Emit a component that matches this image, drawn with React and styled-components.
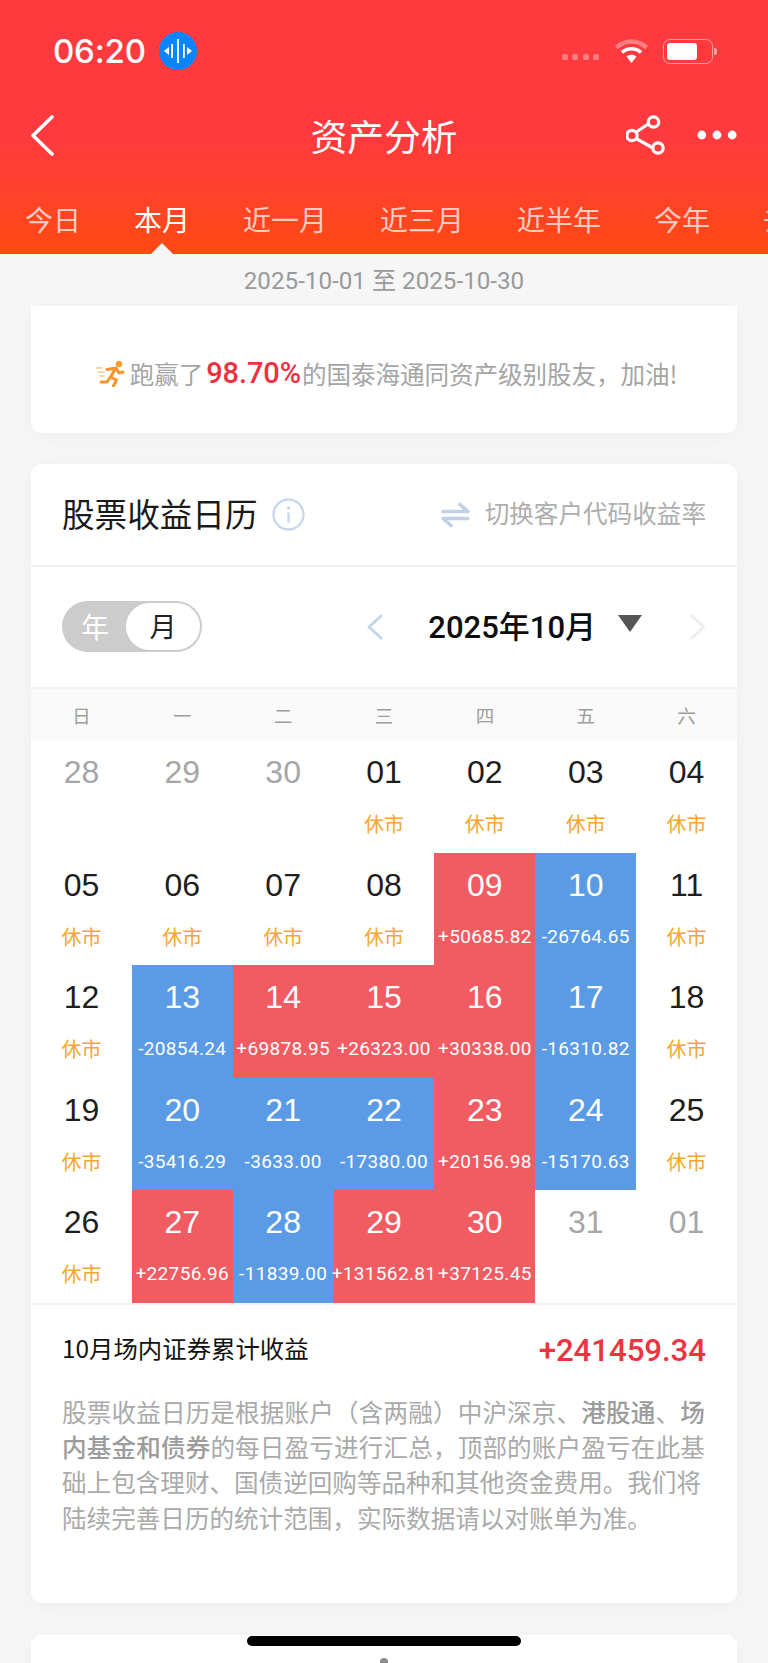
import React from "react";
import styled, { createGlobalStyle } from "styled-components";

const CJK = '"Noto Sans CJK SC", sans-serif';
const DIN = `Roboto, ${CJK}`;
const HELV = `"Liberation Sans", ${CJK}`;

const Global = createGlobalStyle`
  html, body { margin: 0; padding: 0; background: #f5f5f5; }
  * { box-sizing: border-box; }
  body { font-family: ${CJK}; }
`;

const Page = styled.div`
  position: relative;
  width: 768px;
  height: 1663px;
  overflow: hidden;
  background: #f6f6f6;
`;
const Header = styled.header`
  height: 254px;
  background: linear-gradient(180deg, #ff3a3e 0%, #ff3a3e 55%, #ff4a12 100%);
  color: #fff;
`;
const StatusBar = styled.div`
  height: 102px;
  display: flex;
  align-items: center;
  padding: 0 55px 0 53px;
`;
const Time = styled.span`
  font: 500 33px/1 Inter, sans-serif;
  letter-spacing: -0.2px;
`;
const VoicePill = styled.span`
  width: 38px;
  height: 38px;
  margin-left: 13px;
  border-radius: 50%;
  background: #0a84ff;
  display: flex;
  align-items: center;
  justify-content: center;
`;
const StatusRight = styled.div`
  margin-left: auto;
  display: flex;
  align-items: center;
`;
const SignalDots = styled.div`
  display: flex;
  gap: 4.5px;
  margin: 12px 16px 0 0;
`;
const SignalDot = styled.i`
  width: 6px;
  height: 6px;
  border-radius: 2px;
  background: rgba(255, 255, 255, 0.35);
`;
const Battery = styled.div`
  width: 50px;
  height: 25px;
  margin-left: 15px;
  border: 1.5px solid rgba(255, 255, 255, 0.5);
  border-radius: 7px;
  padding: 3px;
  position: relative;
  display: flex;
  &::after {
    content: "";
    position: absolute;
    right: -5px;
    top: 8px;
    width: 3px;
    height: 7px;
    border-radius: 0 2px 2px 0;
    background: rgba(255, 255, 255, 0.5);
  }
`;
const BatteryFill = styled.i`
  width: 30px;
  border-radius: 3px;
  background: #fff;
`;
const Nav = styled.div`
  height: 70px;
  margin-top: -2px;
  padding: 0 31px;
  display: grid;
  grid-template-columns: 1fr auto 1fr;
  align-items: center;
`;
const NavTitle = styled.h1`
  margin: 0;
  font: 400 36.8px/70px ${CJK};
  letter-spacing: 0;
`;
const NavActions = styled.div`
  display: flex;
  justify-content: flex-end;
  align-items: center;
  gap: 31px;
`;
const Tabs = styled.div`
  margin-top: 16px;
  height: 68px;
  padding-left: 25px;
  display: flex;
  gap: 53px;
  overflow: hidden;
  white-space: nowrap;
`;
const Tab = styled.div`
  position: relative;
  flex: none;
  font: 400 28px/66px ${CJK};
  color: ${(p) => (p.$active ? "#fff" : "rgba(255,255,255,.72)")};
  ${(p) =>
    p.$active &&
    `&::after{content:"";position:absolute;left:50%;bottom:0;margin-left:-11px;border:11px solid transparent;border-top:0;border-bottom-color:#f6f6f6;}`}
`;
const DateBar = styled.div`
  height: 52px;
  text-align: center;
  font: 400 24.2px/54px ${DIN};
  color: #9a9a9a;
`;
const Card = styled.section`
  margin: 0 31px;
  background: #fff;
  border-radius: 10px;
  box-shadow: 0 3px 16px rgba(0, 0, 0, 0.035);
`;
const RankCard = styled(Card)`
  height: 127px;
  padding: 7px 0 0 4px;
  border-radius: 0 0 10px 10px;
  display: flex;
  align-items: center;
  justify-content: center;
  color: #a5a5a5;
  font-size: 24.6px;
  letter-spacing: -0.1px;
`;
const RankIcon = styled.svg`
  width: 30px;
  height: 27px;
  margin-right: 5px;
`;
const RankValue = styled.b`
  font: 500 29px/1 ${DIN};
  color: #f0303f;
  margin: 0 1px 0 3px;
`;
const CalendarCard = styled(Card)`
  margin-top: 31px;
`;
const CardHead = styled.div`
  height: 103px;
  padding: 0 31px;
  border-bottom: 2px solid #f1f1f1;
  display: flex;
  align-items: center;
`;
const CardTitle = styled.h2`
  margin: -2px 15px 0 0;
  font: 400 32.6px/1 ${CJK};
  color: #1a1a1a;
`;
const SwitchLink = styled.div`
  margin-left: auto;
  display: flex;
  align-items: center;
  gap: 15px;
  font-size: 24.6px;
  line-height: 1;
  color: #aeaeae;
`;
const SwitchText = styled.span`
  margin-top: -5px;
`;
const Controls = styled.div`
  height: 120px;
  padding: 0 31px;
  display: flex;
  align-items: center;
`;
const Toggle = styled.div`
  width: 140px;
  height: 51px;
  margin-top: -2px;
  border-radius: 26px;
  padding: 2px;
  background: #cccccc;
  display: flex;
  align-items: center;
`;
const ToggleOff = styled.span`
  width: 62px;
  text-align: center;
  font-size: 28px;
  color: #fff;
`;
const ToggleOn = styled.span`
  width: 74px;
  height: 47px;
  border-radius: 24px;
  background: #fff;
  text-align: center;
  font: 400 27px/45px ${CJK};
  color: #222;
`;
const MonthNav = styled.div`
  margin-left: auto;
  display: flex;
  align-items: center;
`;
const MonthLabel = styled.div`
  margin: 0 22px 0 45px;
  font: 500 31px/1 ${DIN};
  color: #0d0d0d;
`;
const Caret = styled.i`
  width: 0;
  height: 0;
  margin: -8px 48px 0 0;
  border-style: solid;
  border-width: 17px 12px 0;
  border-color: #555 transparent transparent;
`;
const WeekRow = styled.div`
  height: 53px;
  border-top: 2px solid #f2f2f2;
  background: #fafafa;
  display: grid;
  grid-template-columns: repeat(7, 1fr);
  align-items: center;
  text-align: center;
  font-size: 18.4px;
  color: #9d9d9d;
`;
const Grid = styled.div`
  display: grid;
  grid-template-columns: repeat(7, 1fr);
  grid-auto-rows: 112.5px;
  text-align: center;
`;
const Cell = styled.div`
  padding-top: 12px;
  background: ${(p) => (p.$kind === "up" ? "#f15c63" : p.$kind === "down" ? "#5b9be6" : "#fff")};
  white-space: nowrap;
`;
const Day = styled.div`
  font: 400 32px/40px ${HELV};
  color: ${(p) => (p.$muted ? "#a6a6a6" : p.$kind ? "#fff" : "#1e1e1e")};
`;
const Closed = styled.div`
  margin-top: 17px;
  font: 400 20px/30px ${CJK};
  color: #f6a62c;
`;
const Amount = styled.div`
  margin: 17px -4px 0;
  font: 400 19px/30px ${DIN};
  letter-spacing: 0.35px;
  color: #fff;
`;
const Footer = styled.div`
  border-top: 2px solid #f2f2f2;
  padding: 28px 31px 68px;
`;
const Summary = styled.div`
  height: 36px;
  display: flex;
  justify-content: space-between;
  align-items: center;
`;
const SummaryLabel = styled.span`
  margin-bottom: 6px;
  font-size: 24.4px;
  color: #111;
`;
const SummaryValue = styled.span`
  font: 500 31.3px/1 ${DIN};
  color: #ef3340;
  letter-spacing: -0.1px;
`;
const Note = styled.div`
  margin-top: 25px;
  color: #aaaaaa;
  font-size: 24.58px;
  line-height: 35.4px;
  white-space: nowrap;
`;
const NoteLine = styled.div`
  letter-spacing: ${(p) => p.$spacing || 0}px;
  b { font-weight: 500; color: #9c9c9c; }
`;
const NextCard = styled(Card)`
  margin-top: 32px;
  height: 40px;
  display: flex;
  justify-content: center;
  padding-top: 23px;
`;
const NextDot = styled.i`
  width: 8px;
  height: 8px;
  border-radius: 50%;
  background: #8c8c8c;
`;
const HomeBar = styled.div`
  position: absolute;
  left: 247px;
  top: 1636px;
  width: 274px;
  height: 10px;
  border-radius: 5px;
  background: #000;
`;

const tabs = ["今日", "本月", "近一月", "近三月", "近半年", "今年", "去年"];
const weeks = ["日", "一", "二", "三", "四", "五", "六"];
const cells = [
  ["28", "m"], ["29", "m"], ["30", "m"], ["01", "c"], ["02", "c"], ["03", "c"], ["04", "c"],
  ["05", "c"], ["06", "c"], ["07", "c"], ["08", "c"], ["09", "+50685.82"], ["10", "-26764.65"], ["11", "c"],
  ["12", "c"], ["13", "-20854.24"], ["14", "+69878.95"], ["15", "+26323.00"], ["16", "+30338.00"], ["17", "-16310.82"], ["18", "c"],
  ["19", "c"], ["20", "-35416.29"], ["21", "-3633.00"], ["22", "-17380.00"], ["23", "+20156.98"], ["24", "-15170.63"], ["25", "c"],
  ["26", "c"], ["27", "+22756.96"], ["28", "-11839.00"], ["29", "+131562.81"], ["30", "+37125.45"], ["31", "m"], ["01", "m"],
];

function DayCell({ day, value }) {
  const muted = value === "m";
  const closed = value === "c";
  const kind = muted || closed ? undefined : value[0] === "+" ? "up" : "down";
  return (
    <Cell $kind={kind}>
      <Day $muted={muted} $kind={kind}>{day}</Day>
      {closed && <Closed>休市</Closed>}
      {kind && <Amount>{value}</Amount>}
    </Cell>
  );
}

const Chevron = ({ dir, color, w = 16, h = 26, sw = 3 }) => (
  <svg width={w} height={h} viewBox={`0 0 ${w} ${h}`} fill="none">
    <path
      d={dir === "left" ? `M${w - 2} 2 L2 ${h / 2} L${w - 2} ${h - 2}` : `M2 2 L${w - 2} ${h / 2} L2 ${h - 2}`}
      stroke={color}
      strokeWidth={sw}
      strokeLinecap="round"
      strokeLinejoin="round"
    />
  </svg>
);

export default function App() {
  return (
    <Page>
      <Global />
      <Header>
        <StatusBar>
          <Time>06:20</Time>
          <VoicePill>
            <svg width="30" height="30" viewBox="0 0 30 30" fill="#fff">
              <path d="M1 15l5-4v8zM29 15l-5-4v8z" />
              <rect x="8.2" y="8" width="1.8" height="14" />
              <rect x="14.1" y="3" width="1.8" height="24" />
              <rect x="20" y="8" width="1.8" height="14" />
            </svg>
          </VoicePill>
          <StatusRight>
            <SignalDots>
              <SignalDot /><SignalDot /><SignalDot /><SignalDot />
            </SignalDots>
            <svg width="33" height="24" viewBox="0 0 33 24" fill="none">
              <path d="M1.5 8.5C10 .5 23 .5 31.5 8.5" stroke="rgba(255,255,255,.35)" strokeWidth="4.5" />
              <path d="M7 13.5c5.5-5 13.5-5 19 0" stroke="#fff" strokeWidth="3.6" />
              <path d="M11.5 17.5 16.5 24l5-6.5c-3-2.4-7-2.4-10 0z" fill="#fff" />
            </svg>
            <Battery><BatteryFill /></Battery>
          </StatusRight>
        </StatusBar>
        <Nav>
          <Chevron dir="left" color="#fff" w={23} h={41} sw={3.6} />
          <NavTitle>资产分析</NavTitle>
          <NavActions>
            <svg width="40" height="40" viewBox="0 0 40 40" fill="none" stroke="#fff" strokeWidth="3.2">
              <path d="M11 16.5 23 8.5M11 24l15 8.5" />
              <circle cx="27.5" cy="7" r="5.2" />
              <circle cx="6" cy="20.5" r="5.2" />
              <circle cx="32" cy="33" r="5.2" />
            </svg>
            <svg width="40" height="10" viewBox="0 0 40 10" fill="#fff">
              <circle cx="4.8" cy="5" r="4.4" />
              <circle cx="20" cy="5" r="4.4" />
              <circle cx="35.2" cy="5" r="4.4" />
            </svg>
          </NavActions>
        </Nav>
        <Tabs>
          {tabs.map((t) => (
            <Tab key={t} $active={t === "本月"}>{t}</Tab>
          ))}
        </Tabs>
      </Header>
      <DateBar>2025-10-01 至 2025-10-30</DateBar>
      <RankCard>
        <RankIcon viewBox="0 0 30 27" fill="none" strokeLinecap="round" strokeLinejoin="round">
          <path d="M1 8h6M3 12h6M5 16h4" stroke="#fbc78c" strokeWidth="1.6" />
          <circle cx="24" cy="4" r="3.2" fill="#f9a030" />
          <path d="M12 9.5 21 8l-5.5 9 6 3-3 6M15.5 17 12 22H6M21 8l3 5 4-1" stroke="#f9952c" strokeWidth="3" />
        </RankIcon>
        跑赢了<RankValue>98.70%</RankValue>的国泰海通同资产级别股友，加油!
      </RankCard>
      <CalendarCard>
        <CardHead>
          <CardTitle>股票收益日历</CardTitle>
          <svg width="33" height="33" viewBox="0 0 33 33" fill="none">
            <circle cx="16.5" cy="16.5" r="15" stroke="#c9d9ea" strokeWidth="2.4" />
            <circle cx="16.5" cy="10" r="1.8" fill="#c9d9ea" />
            <path d="M16.5 14.5v10" stroke="#c9d9ea" strokeWidth="2.4" />
          </svg>
          <SwitchLink>
            <svg width="29" height="26" viewBox="0 0 29 26" fill="none" stroke="#bfd2e6" strokeWidth="3.6" strokeLinecap="round" strokeLinejoin="round">
              <path d="M2 9.5h25L19 2.5M27 16.5H2l8 7" />
            </svg>
            <SwitchText>切换客户代码收益率</SwitchText>
          </SwitchLink>
        </CardHead>
        <Controls>
          <Toggle>
            <ToggleOff>年</ToggleOff>
            <ToggleOn>月</ToggleOn>
          </Toggle>
          <MonthNav>
            <Chevron dir="left" color="#c5d6e8" />
            <MonthLabel>2025年10月</MonthLabel>
            <Caret />
            <Chevron dir="right" color="#eeeeee" />
          </MonthNav>
        </Controls>
        <WeekRow>
          {weeks.map((w) => (
            <span key={w}>{w}</span>
          ))}
        </WeekRow>
        <Grid>
          {cells.map(([d, v], i) => (
            <DayCell key={i} day={d} value={v} />
          ))}
        </Grid>
        <Footer>
          <Summary>
            <SummaryLabel>10月场内证券累计收益</SummaryLabel>
            <SummaryValue>+241459.34</SummaryValue>
          </Summary>
          <Note>
            <NoteLine $spacing={0.15}>股票收益日历是根据账户（含两融）中沪深京、<b>港股通</b>、<b>场</b></NoteLine>
            <NoteLine $spacing={0.15}><b>内基金和债券</b>的每日盈亏进行汇总，顶部的账户盈亏在此基</NoteLine>
            <NoteLine>础上包含理财、国债逆回购等品种和其他资金费用。我们将</NoteLine>
            <NoteLine>陆续完善日历的统计范围，实际数据请以对账单为准。</NoteLine>
          </Note>
        </Footer>
      </CalendarCard>
      <NextCard><NextDot /></NextCard>
      <HomeBar />
    </Page>
  );
}
